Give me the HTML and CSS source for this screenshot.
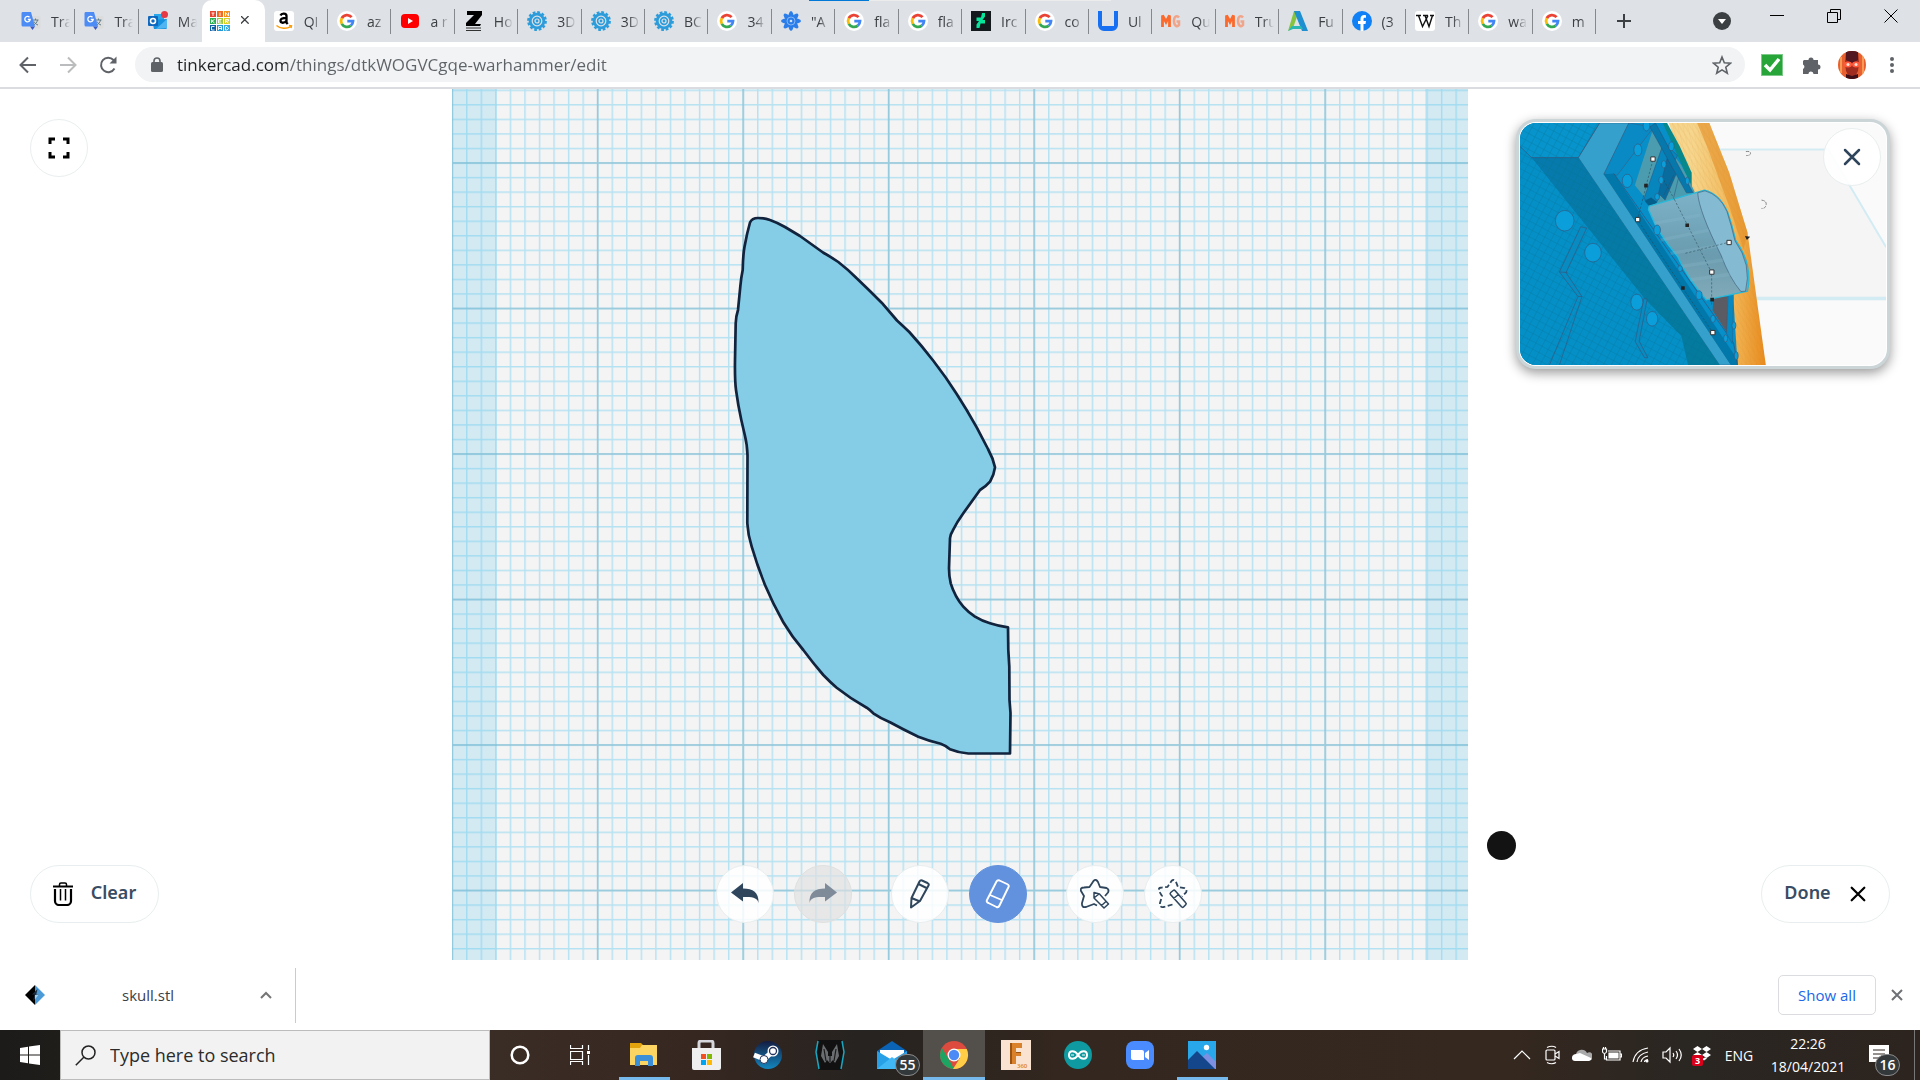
FILE: index.html
```html
<!DOCTYPE html>
<html lang="en">
<head>
<title>Tinkercad</title>
<meta charset="utf-8"/>
<link rel="stylesheet" href="styles.css">
</head>
<body>

<!-- shared icons -->
<svg class="defs" width="0" height="0">
  <symbol id="i-google" viewBox="0 0 20 20">
    <circle cx="10" cy="10" r="10" fill="#fff"/>
    <g fill="none" stroke-width="2.8">
      <path d="M14.6 6.2A6 6 0 0 0 4.8 7.2" stroke="#ea4335"/>
      <path d="M4.8 7.2A6 6 0 0 0 4.8 12.8" stroke="#fbbc05"/>
      <path d="M4.8 12.8A6 6 0 0 0 13.8 14.6" stroke="#34a853"/>
      <path d="M13.8 14.6A6 6 0 0 0 16 10.2H10.3" stroke="#4285f4"/>
    </g>
  </symbol>
  <symbol id="i-translate" viewBox="0 0 20 20">
    <path d="M9 5h9a1.500 1.500 0 0 1 1.500 1.500V16a1.500 1.500 0 0 1-1.500 1.500h-6z" fill="#dcdcdc"/>
    <path d="M11.500 9h6M14.500 7.500V9M16.500 9c-.5 2.500-2 4-4 5M13 10.500c1 2 2.500 3 4 3.500" stroke="#607d8b" fill="none"/>
    <path d="M1.500 1h8.500l4 14.500H2A1.500 1.500 0 0 1 .5 14V2.500A1.500 1.500 0 0 1 1.500 1z" fill="#4d8bf5"/>
    <path d="M9 15.500h5L11.500 19z" fill="#3a5bc7"/>
    <path d="M8.500 6.300A2.700 2.700 0 1 0 9.200 8.500H6.800" stroke="#fff" stroke-width="1.300" fill="none"/>
  </symbol>
  <symbol id="i-gear" viewBox="0 0 20 20">
    <circle cx="10" cy="10" r="8.300" fill="#2d9cdb"/>
    <circle cx="10" cy="10" r="8.600" fill="none" stroke="#2d9cdb" stroke-width="2.600" stroke-dasharray="2.700 1.800"/>
    <circle cx="10" cy="10" r="4.800" fill="none" stroke="#dee1e6" stroke-width="1.200"/>
    <circle cx="10" cy="10" r="2" fill="none" stroke="#dee1e6" stroke-width="1.200"/>
  </symbol>
  <symbol id="i-mg" viewBox="0 0 20 20">
    <path d="M1.500 16V4.500L5 11l3.500-6.500V16" fill="none" stroke="#fb6a2c" stroke-width="2.800"/>
    <path d="M18 6.500c-1.500-2-5-2-5 3.500s3.500 6 5 4v-3.500h-2.500" fill="none" stroke="#f0a58a" stroke-width="2.500"/>
  </symbol>
  <symbol id="i-x" viewBox="0 0 20 20">
    <path d="M3 3l14 14M17 3L3 17" fill="none" stroke="currentColor" stroke-width="2.500" stroke-linecap="round"/>
  </symbol>
</svg>

<div class="tabstrip">
  <div class="tabs">
    <button class="tab"><svg class="fav"><use href="#i-translate"/></svg><span>Tra</span></button>
    <button class="tab"><svg class="fav"><use href="#i-translate"/></svg><span>Tra</span></button>
    <button class="tab before">
      <svg class="fav" viewBox="0 0 20 20"><path d="M6 3h10v8H6z" fill="#28a8ea"/><path d="M4 9l15-1v8.500a1.500 1.500 0 0 1-1.500 1.500H6z" fill="#1490df"/><path d="M8 18l11-10v9z" fill="#50b5f0"/><rect y="5" width="10" height="10" rx="1" fill="#0f68be"/><circle cx="5" cy="10" r="2.500" fill="none" stroke="#fff" stroke-width="1.500"/><circle cx="16.500" cy="3.500" r="3.500" fill="#e53945"/></svg>
      <span>Ma</span></button>
    <button class="tab active" aria-label="Tinkercad">
      <svg class="fav" viewBox="0 0 20 20">
        <path d="M0 0h6v6H0z" fill="#e8432e"/><path d="M7 0h6v6H7z" fill="#f26a21"/><path d="M14 0h6v6h-6z" fill="#f5921e"/>
        <path d="M0 7h6v6H0z" fill="#2eae52"/><path d="M7 7h6v6H7z" fill="#9bca3c"/><path d="M14 7h6v6h-6z" fill="#d9d021"/>
        <path d="M0 14h6v6H0z" fill="#0f5fa6"/><path d="M7 14h6v6H7z" fill="#1f9ad6"/><path d="M14 14h6v6h-6z" fill="#36a9e1"/>
        <path d="M1.500 2h3M3 2v3M10 1.500v3.500M15.500 5V1.500l3 3.500V1.500M1.500 8.500V12M4.500 8.500L2 10l2.500 2M11.500 8.500h-3V12h3M8.500 10h2.500M15.500 12V8.500h3v1.500h-3l3 2M4.500 15.500h-3V19h3M8.500 19v-3.500h3V19M8.500 17.500h3M15.500 15.500v3.500h1.500l1.500-1.500-1.500-2z" fill="none" stroke="#fff" stroke-width=".9"/>
      </svg>
      <svg class="close" viewBox="2 2 16 16"><use href="#i-x"/></svg></button>
    <button class="tab">
      <svg class="fav" viewBox="0 0 20 20"><rect width="20" height="20" rx="3" fill="#fff"/><path d="M6.500 4.500c1-2.500 6-2.500 6 .5v6.500l1.200 1.500M12.500 6.800c-3.500 0-6 .7-6 3s4 3 6-.3" fill="none" stroke="#000" stroke-width="2.300"/><path d="M2.500 14.500c4 3.500 10 3.700 14.500.8M15 14.500l2.500.3-.5 2.200" fill="none" stroke="#f90" stroke-width="1.400"/></svg>
      <span>QI</span></button>
    <button class="tab"><svg class="fav"><use href="#i-google"/></svg><span>az</span></button>
    <button class="tab"><svg class="fav" viewBox="0 0 20 20"><rect x="1" y="3" width="18" height="14" rx="4" fill="#f00"/><path d="M8 7l5 3-5 3z" fill="#fff"/></svg><span>a r</span></button>
    <button class="tab"><svg class="fav" viewBox="0 0 20 20"><path d="M3 0h15v4l-7 9h6l-1 2H2v-3l8-8H3z"/><path d="M2 17h15M2 19.500h15" stroke="#333"/></svg><span>Ho</span></button>
    <button class="tab"><svg class="fav"><use href="#i-gear"/></svg><span>3D</span></button>
    <button class="tab"><svg class="fav"><use href="#i-gear"/></svg><span>3D</span></button>
    <button class="tab"><svg class="fav"><use href="#i-gear"/></svg><span>BC</span></button>
    <button class="tab"><svg class="fav"><use href="#i-google"/></svg><span>34</span></button>
    <button class="tab">
      <svg class="fav" viewBox="0 0 20 20"><g fill="#2b7de9"><ellipse cx="10" cy="10" rx="3.200" ry="10"/><ellipse cx="10" cy="10" rx="3.200" ry="10" transform="rotate(45 10 10)"/><ellipse cx="10" cy="10" rx="3.200" ry="10" transform="rotate(90 10 10)"/><ellipse cx="10" cy="10" rx="3.200" ry="10" transform="rotate(135 10 10)"/></g><circle cx="10" cy="10" r="4" fill="none" stroke="#9cc3f6" stroke-width=".8"/><circle cx="10" cy="10" r="1.300" fill="#cfe1fa"/></svg>
      <span>"A</span></button>
    <button class="tab"><svg class="fav"><use href="#i-google"/></svg><span>fla</span></button>
    <button class="tab"><svg class="fav"><use href="#i-google"/></svg><span>fla</span></button>
    <button class="tab"><svg class="fav" viewBox="0 0 20 20"><path d="M0 0h20v20H0z" fill="#14191d"/><path d="M14 2v3.500L11.500 9H14v3.500H9.500L8.500 17H5.500v-3.500L8 10H5.500V6.500H10L11 2z" fill="#06e59a"/></svg><span>Irc</span></button>
    <button class="tab"><svg class="fav"><use href="#i-google"/></svg><span>co</span></button>
    <button class="tab"><svg class="fav" viewBox="0 0 20 20"><path d="M0 0h4v15h12V0h4v14a6 6 0 0 1-6 6H6a6 6 0 0 1-6-6z" fill="#176ff2"/></svg><span>Ul</span></button>
    <button class="tab"><svg class="fav"><use href="#i-mg"/></svg><span>Qu</span></button>
    <button class="tab"><svg class="fav"><use href="#i-mg"/></svg><span>Tru</span></button>
    <button class="tab"><svg class="fav" viewBox="0 0 20 20"><path d="M0 20L6 0h5L5 17z" fill="#86c440"/><path d="M6 0h6l8 20h-6z" fill="#1e8fd0"/><path d="M0 20l4-5h9l2 3H5z" fill="#2bb7b3"/></svg><span>Fu</span></button>
    <button class="tab"><svg class="fav" viewBox="0 0 20 20"><circle cx="10" cy="10" r="10" fill="#0f80f5"/><path d="M8.500 20v-7H6v-3h2.500V8c0-2.500 1.500-4 3.800-4l1.700.2v2.500h-1.200c-1 0-1.300.6-1.300 1.300v2H14l-.5 3h-2v7z" fill="#fff"/></svg><span>(3</span></button>
    <button class="tab"><svg class="fav" viewBox="0 0 20 20"><rect width="20" height="20" rx="3" fill="#fff"/><path d="M1 4.500h5M8 4.500h5M15 4.500h4M3.500 4.500l4 11 5.500-11M10 4.500l4 11 3.500-11" fill="none" stroke="#111" stroke-width="1.400"/></svg><span>Th</span></button>
    <button class="tab"><svg class="fav"><use href="#i-google"/></svg><span>wa</span></button>
    <button class="tab"><svg class="fav"><use href="#i-google"/></svg><span>m</span></button>
  </div>
  <div class="win-btns">
    <button class="newtab" aria-label="New tab"><svg width="16" height="16"><path d="M8 1v14M1 8h14" stroke="#3c4043" stroke-width="2"/></svg></button>
    <button class="tabsearch" aria-label="Search tabs"><svg width="18" height="18"><circle cx="9" cy="9" r="9" fill="#3c4043"/><path d="M5 7h8l-4 5z" fill="#fff"/></svg></button>
    <button aria-label="Minimise"><svg width="14" height="14"><path d="M0 6.500h14" stroke="#000"/></svg></button>
    <button aria-label="Restore"><svg width="14" height="14"><path d="M.5 3.500h10v10H.5zM3.500 3V.5h10v10H11" fill="none" stroke="#000"/></svg></button>
    <button aria-label="Close"><svg width="14" height="14"><path d="M.5.5l13 13M13.500.5l-13 13" stroke="#000"/></svg></button>
  </div>
  <div class="loadbar"></div>
</div>

<div class="toolbar">
  <button aria-label="Back"><svg width="20" height="20"><path d="M18 10H3M10 2.500L2.500 10l7.500 7.500" fill="none" stroke="#5f6368" stroke-width="2"/></svg></button>
  <button aria-label="Forward"><svg width="20" height="20"><path d="M2 10h15M10 2.500l7.500 7.500-7.500 7.500" fill="none" stroke="#babcbe" stroke-width="2"/></svg></button>
  <button aria-label="Reload"><svg width="20" height="20"><path d="M16.500 13.500A7.200 7.200 0 1 1 15.500 5L17 6.500" fill="none" stroke="#5f6368" stroke-width="2"/><path d="M18.500 1.500v7h-7z" fill="#5f6368"/></svg></button>
  <div class="omnibox">
    <svg width="12" height="15"><rect y="5" width="12" height="10" rx="1.500" fill="#5f6368"/><path d="M3 6V4a3 3 0 0 1 6 0v2" fill="none" stroke="#5f6368" stroke-width="1.600"/></svg>
    <input type="text" aria-label="Address" value="tinkercad.com/things/dtkWOGVCgqe-warhammer/edit">
    <svg width="20" height="20" viewBox="0 0 20 20"><path d="M10 2l2.300 5.700 6.200.5-4.700 4 1.500 6-5.300-3.300-5.300 3.300 1.500-6-4.700-4 6.200-.5z" fill="none" stroke="#5f6368" stroke-width="1.600"/></svg>
  </div>
  <button aria-label="Extension"><svg width="22" height="22"><path d="M0 0h22v22H0z" fill="#7cc98a"/><path d="M1 1h20v20H1z" fill="#27a538"/><path d="M4 11l5 5 9-11" fill="none" stroke="#fff" stroke-width="3.500"/></svg></button>
  <button aria-label="Extensions"><svg width="20" height="20"><path d="M2 5h4.500a2.500 2.500 0 1 1 5 0H16v4.500a2.500 2.500 0 1 1 0 5V19h-4.500a2.500 2.500 0 0 0-5 0H1v-5a2.500 2.500 0 0 0 0-4.500V6z" fill="#5f6368"/></svg></button>
  <button aria-label="Profile">
    <svg width="28" height="28"><defs><clipPath id="av"><circle cx="14" cy="14" r="14"/></clipPath></defs><g clip-path="url(#av)"><path d="M0 0h28v28H0z" fill="#e8602f"/><path d="M3 6v16M25 5v18" stroke="#f79a55" stroke-width="2"/><path d="M8 0h12l1 12-1 8-4 8h-4l-4-8-1-8z" fill="#a02c20"/><path d="M8 0h12v9l-6 3-6-3z" fill="#521720"/><ellipse cx="10" cy="13.500" rx="4" ry="3" fill="#ff5a3c"/><ellipse cx="18" cy="13.500" rx="4" ry="3" fill="#ff5a3c"/><circle cx="10" cy="13.500" r="1.500" fill="#ffe3d6"/><circle cx="18" cy="13.500" r="1.500" fill="#ffe3d6"/><path d="M8 23l6 2 6-2v5H8z" fill="#3f0f17"/></g></svg></button>
  <button aria-label="Menu"><svg width="6" height="18"><circle cx="3" cy="3" r="2" fill="#5f6368"/><circle cx="3" cy="9" r="2" fill="#5f6368"/><circle cx="3" cy="15" r="2" fill="#5f6368"/></svg></button>
</div>

<div class="workspace">
  <div class="side side-left">
    <button class="round" aria-label="Fullscreen"><svg width="22" height="22"><path d="M2 7V2h5M15 2h5v5M20 15v5h-5M7 20H2v-5" fill="none" stroke="#000" stroke-width="3"/></svg></button>
    <button class="pill">
      <svg width="20" height="24"><path d="M0 4.500h20" stroke="#000" stroke-width="2"/><path d="M6.500 4V2.500A1.500 1.500 0 0 1 8 1h4a1.500 1.500 0 0 1 1.500 1.500V4" fill="none" stroke="#000" stroke-width="1.500"/><path d="M2 7v12a4 4 0 0 0 4 4h8a4 4 0 0 0 4-4V7" fill="none" stroke="#000" stroke-width="2.200"/><path d="M7.500 7v11.500M12.500 7v11.500" stroke="#000" stroke-width="1.500"/></svg>
      <span>Clear</span></button>
  </div>

  <div class="board">
    <svg class="sketch" viewBox="452 89 1016 871" preserveAspectRatio="xMidYMin slice">
      <defs>
        <pattern id="minor" x="451.5" y="162.300" width="14.550" height="14.550" patternUnits="userSpaceOnUse">
          <path d="M.7 0v14.550M0 .7h14.550" stroke="#5cc8ee" stroke-opacity=".42" stroke-width="1.500"/>
        </pattern>
        <pattern id="major" x="451.2" y="162" width="145.500" height="145.500" patternUnits="userSpaceOnUse">
          <path d="M1 0v145.500M0 1h145.500" stroke="#5c9fb8" stroke-opacity=".34" stroke-width="2"/>
        </pattern>
      </defs>
      <path d="M452 89h1016v871H452z" fill="#f4f4f4"/>
      <path d="M452 89h45v871h-45zM1425 89h43v871h-43z" fill="#d4eaf2"/>
      <path d="M452 89h1016v871H452z" fill="url(#minor)"/>
      <path d="M452 89h1016v871H452z" fill="url(#major)"/>
      <path d="M750 222.500Q752 218 758 218Q765 218 770 220Q777 222.500 785 227L800 236L823 252.500Q831 257 838.300 262Q848 269.500 856.700 278.300Q870 291 881.700 302.700L897 320.500Q903 326 909.300 332Q922 346 933.300 360.700Q946 377 956.700 394Q967 410 976.700 427.300L988 449Q993 458 995 467.300Q994 475 990 481.700Q986 486.500 980 490L963.300 513.300Q957 522 952.700 530.700Q950 535 950 538.300L949 568.300Q949 576 950.700 583.300Q955 597 963.300 606.700Q968 612 975 616.700Q982 621 990 623.300Q998 626 1008 627.300L1008.300 650L1009.300 666.700L1009.500 700L1010.500 713L1010 753.500H968.300Q959 753 950 749.300Q945 745 940.700 743.700Q929 741 918.300 736.700Q904 730 890 722.300Q881 718.500 873.300 713.300Q870 710 866.700 707.700Q851 699 836.700 687.700Q830 682 823.300 675Q813 663 803.300 650Q792 637 783.300 622.300Q773 604 765 585Q757 565 751.700 546.700Q748 535 747.300 523.300L747.500 455Q747 444 745 436L741.300 420Q738 405 736 390Q734.700 380 735 360L735.700 323.300Q736 316 738 310L740.300 286.700Q741 278 742.700 270Q743 255 744.500 246.700Q747 233 750 222.500z" fill="#85cce6" stroke="#11233d" stroke-width="2.700" stroke-linejoin="round"/>
    </svg>
    <div class="tools">
      <button class="round" aria-label="Undo"><svg width="28" height="22"><path d="M0 9.500L12 0v5.500c10 0 16 4 15.500 14.500-1-5-5-6.500-15.500-6v4.500z" fill="#2f455c"/></svg></button>
      <button class="round off" aria-label="Redo" disabled><svg width="28" height="22"><path d="M28 9.500L16 0v5.500C6 5.500 0 9.500.5 20c1-5 5-6.500 15.500-6v4.500z" fill="#7f8b98"/></svg></button>
      <button class="round gap" aria-label="Pencil"><svg width="22" height="30"><path d="M2 28.500l.5-9.500L10.500 2.500Q11.500.8 13 1.500l5.500 2.500q1.800 1 1 2.500L11 22zM2.500 19l8.500 3.500M9.500 5l9 4.500" fill="none" stroke="#2f455c" stroke-width="2" stroke-linejoin="round"/></svg></button>
      <button class="round on" aria-label="Eraser"><svg width="26" height="30"><path d="M2 21L11.500 2.500Q12.500.7 14.500 1.500l7.500 3.500q2.500 1.200 1.500 3L14.500 26.500Q13.500 28.800 11.500 28l-8-4Q1 23 2 21zM5 16l13 5.500" fill="none" stroke="#fff" stroke-width="1.900"/></svg></button>
      <button class="round gap" aria-label="Draw shape"><svg width="30" height="30"><path d="M17 26.500l-3-1.500-8 3Q1.500 29 2 24l2-7-3-5Q0 8.500 4 8.500l5.500-.5 4-6q2.500-2.500 4.500 1l2 5 6.500 1q3 1.500 1.500 4.500l-3 3.500" fill="none" stroke="#2f455c" stroke-width="1.800" stroke-linejoin="round"/><path d="M14 19v-5.500l5.500 1.500L28.500 25l-4.500 4zM14.500 18.500l4.500-3.500M21.500 26.500l4.500-4" fill="none" stroke="#2f455c" stroke-width="1.500" stroke-linejoin="round"/></svg></button>
      <button class="round" aria-label="Erase shape"><svg width="30" height="30"><path d="M14.500 25.500L6 28Q1.500 29 2 24l2-7-3-5Q0 8.500 4 8.500l5.500-.5 4-6q2.500-2.500 4.500 1l2 5 6.500 1q3 1.500 1.500 4.500l-4 4" fill="none" stroke="#2f455c" stroke-width="1.800" stroke-dasharray="5 2.500"/><path d="M12.500 15.500q-.8-1 .2-2l2.500-2q1-.8 2 .2l10.500 12q1 1 0 2L25.500 28q-1 .8-2-.2zM15.500 19.500l5-4" fill="none" stroke="#2f455c" stroke-width="1.600"/></svg></button>
    </div>
  </div>

  <div class="side side-right">
    <div class="preview">
      <svg class="scene" viewBox="57 38 1102 728" preserveAspectRatio="xMidYMid slice">
        <defs>
          <pattern id="mesh" width="21" height="21" patternUnits="userSpaceOnUse" patternTransform="rotate(28)"><path d="M0 0h21M0 0v21" stroke="#036f8e" stroke-width="2" stroke-opacity=".75" fill="none"/></pattern>
          <pattern id="grain" width="14" height="40" patternUnits="userSpaceOnUse" patternTransform="rotate(-14)"><path d="M0 0v40M0 0l14 40" stroke="#c98322" stroke-opacity=".4" fill="none"/></pattern>
          <linearGradient id="gold" x1="0" x2="1"><stop offset=".25" stop-color="#f6d58c"/><stop offset=".65" stop-color="#f2b95a"/><stop offset="1" stop-color="#e88a1c"/></linearGradient>
          <linearGradient id="face" x1="0" y1="0" x2="0" y2="1"><stop offset="0" stop-color="#7db3c9"/><stop offset=".6" stop-color="#6a9bae"/><stop offset="1" stop-color="#82abb9"/></linearGradient>
          <linearGradient id="shade" x1="0" y1="0" x2="1" y2="1"><stop offset="0" stop-color="#067aad"/><stop offset="1" stop-color="#047a9c"/></linearGradient>
        </defs>
        <path d="M57 38h1102v728H57z" fill="#fafafa"/>
        <path d="M540 118h440l179 290v158H700z" fill="#f5f5f5"/>
        <path d="M540 118h445L1159 412" fill="none" stroke="#d3ecf4" stroke-width="6"/>
        <path d="M690 566h469" stroke="#d3ecf4" stroke-width="10"/>
        <path d="M505 38h122l60 150 55 180 55 398H700V560L578 240z" fill="url(#gold)"/>
        <path d="M627 38l60 150 55 180-12 50-40-120-70-190-30-70z" fill="#e58f28" opacity=".6"/>
        <path d="M505 38h122l60 150 55 180 55 398H700V560L578 240z" fill="url(#grain)"/>
        <path d="M500 38l38 70 36 80v50l-60-90-50-110z" fill="#07888a"/>
        <path d="M57 38h430l92 202 120 320 13 206H57z" fill="#078fc9"/>
        <path d="M57 38h240l-64 104H92L57 108z" fill="#0793cb"/>
        <path d="M297 38h88L310 192l383 574h-35L233 142z" fill="#35a0cc" stroke="#35637f" stroke-width="1.500"/>
        <path d="M92 142h141l425 624H550L400 540z" fill="url(#shade)"/>
        <path d="M57 108l35 34 343 427 108 110 20 87H57z" fill="#058fc7"/>
        <path d="M57 38h240l-64 104 425 624H57z" fill="url(#mesh)"/>
        <path d="M57 108l35 34h141l64-104" fill="none" stroke="#35577f" stroke-width="2"/>
        <path d="M385 38L310 192l40 3L460 50z" fill="#0a8ac4" stroke="#43577a" stroke-width="1.500"/>
        <path d="M310 192l30-2 372 560v16h-20z" fill="#0277a9"/>
        <path d="M340 190L700 700l12 66" fill="none" stroke="#364e74" stroke-width="2"/>
        <path d="M458 55l-55 170 60 75 120-55-40-80z" fill="#4b9cae"/>
        <path d="M490 96l-60 170 35 20 36-90 30-60z" fill="#0785bd" stroke="#2b4e79" stroke-width="1.500"/>
        <path d="M500 145l28 45-34 80-20-20zM520 195l-30 60M535 200l-15 62" fill="#086c9e" stroke="#2b4e79" stroke-width="1.500"/>
        <path d="M465 38l113 210h-20L448 50z" fill="#0678ab" stroke="#2b4e79" stroke-width="1.500"/>
        <path d="M640 560h42v112l-45-70z" fill="#5b5b63"/>
        <path d="M684 550h16l-4 152-17-30z" fill="#0789c0" stroke="#2b4e79"/>
        <path d="M432 272l20-10 18 14-20 18z" fill="#045f8c"/>
        <path d="M446 288l146-42 20-6q45 10 70 66 14 40 24 84 28 40 36 78 8 40 0 76L618 570q-60-70-86-130-60-70-88-142z" fill="url(#face)" stroke="#28b9da" stroke-width="4"/>
        <path d="M592 248l22-6q44 12 66 62 14 44 24 88 26 36 34 74 8 40-2 78l-14 1q-34-40-60-110-66-130-70-187z" fill="#84bbd2" stroke="#41607e" stroke-width="2"/>
        <path d="M460 340l140-25M480 390l145-30M510 430l140-22M540 470l130-20M570 510l120-17" stroke="#8bbccd" stroke-width="10" opacity=".25"/>
        <path d="M522 268l112 220v100M555 430l130-33M457 150l-20 77-26 102 136 205 90 134M490 210l32 58" fill="none" stroke="#26434f" stroke-width="1.500" stroke-dasharray="7 5"/>
        <g fill="#0a9fda" stroke="#35577f" stroke-width="2">
          <path d="M240 350l-64 136 56 74h12l-48-72 62-134zM232 560L146 766M244 560L176 766M176 486l24 2M430 566l-26 130 28 48h10l-26-50 24-126z" fill="#078bc0"/>
          <ellipse cx="192" cy="332" rx="28" ry="31"/><ellipse cx="277" cy="428" rx="25" ry="28"/><ellipse cx="409" cy="577" rx="18" ry="24"/><ellipse cx="455" cy="627" rx="17" ry="22"/>
          <ellipse cx="412" cy="119" rx="12" ry="18"/><ellipse cx="380" cy="212" rx="15" ry="20"/><ellipse cx="438" cy="46" rx="10" ry="16"/><ellipse cx="470" cy="360" rx="10" ry="15"/><ellipse cx="596" cy="556" rx="9" ry="13"/><ellipse cx="638" cy="627" rx="7" ry="11"/><ellipse cx="676" cy="686" rx="6" ry="11"/><ellipse cx="701" cy="647" rx="6" ry="11"/><ellipse cx="708" cy="738" rx="6" ry="12"/><ellipse cx="539" cy="476" rx="7" ry="9"/><ellipse cx="513" cy="108" rx="8" ry="13"/><ellipse cx="482" cy="210" rx="7" ry="11"/><ellipse cx="470" cy="260" rx="7" ry="10"/><ellipse cx="490" cy="162" rx="7" ry="11"/><ellipse cx="561" cy="212" rx="6" ry="11"/>
        </g>
        <g fill="#fff" stroke="#333" stroke-width="3"><path d="M451 140h13v13h-13zM405 322h13v13h-13zM680 391h13v13h-13zM628 480h13v13h-13zM631 662h13v13h-13z"/></g>
        <path d="M431 221h11v11h-11zM555 340h11v11h-11zM542 529h11v11h-11zM630 564h11v11h-11zM734 378l16 2-10 10z" fill="#222"/>
        <path d="M737 124q14-2 14 5t-13 7M784 270q16 2 14 14t-14 11" fill="none" stroke="#888" stroke-width="3" stroke-dasharray="10 3"/>
      </svg>
      <button class="round preview-close" aria-label="Close preview"><svg width="20" height="20"><use href="#i-x"/></svg></button>
    </div>
    <button class="pill"><span>Done</span> <svg width="18" height="18" viewBox="0 0 20 20" color="#000"><use href="#i-x"/></svg></button>
  </div>
  <div class="brush"></div>
</div>

<div class="downloads">
  <button class="dl-item">
    <svg width="20" height="20"><path d="M10 0L0 10l10 10z"/><path d="M10 0l10 10-10 10z" fill="#4a9bd8"/><path d="M12.500 4L7 9.500h2.500L8 16l6-6.500h-2.700z" fill="#1d2c3c"/><path d="M10 10l4-.5-4 5z" fill="#9bd0f0"/></svg>
    <span>skull.stl</span>
    <svg width="12" height="8"><path d="M1 7l5-5 5 5" fill="none" stroke="#757575" stroke-width="2"/></svg>
  </button>
  <button class="showall">Show all</button>
  <button class="dl-close" aria-label="Close downloads"><svg width="12" height="12"><path d="M1 1l10 10M11 1L1 11" stroke="#6e7175" stroke-width="2"/></svg></button>
</div>

<div class="taskbar">
  <button class="start" aria-label="Start"><svg width="20" height="20"><path d="M0 3l8-1.200v7.700H0zM9 1.600L20 0v9.500H9zM0 10.500h8v7.700L0 17zM9 10.500h11V20L9 18.400z" fill="#fff"/></svg></button>
  <div class="search">
    <svg width="21" height="21"><circle cx="13.500" cy="7.500" r="6.500" fill="none" stroke="#222" stroke-width="1.500"/><path d="M9 12L.8 20.200" stroke="#222" stroke-width="1.500"/></svg>
    <input type="text" aria-label="Search" placeholder="Type here to search">
  </div>
  <div class="shell">
    <button aria-label="Cortana"><svg width="20" height="20"><circle cx="10" cy="10" r="8.300" fill="none" stroke="#fff" stroke-width="2.500"/></svg></button>
    <button aria-label="Task view"><svg width="20" height="20"><path d="M.5 0v3.500h12V0M.5 20v-3.500h12V20M.5 6.500h12v8H.5zM18.500 0v5M18.500 10v10" fill="none" stroke="#fff" stroke-width="1.200"/><path d="M17 6h3v3h-3z" fill="#fff"/></svg></button>
  </div>
  <div class="apps">
    <button class="open" aria-label="File Explorer"><svg width="30" height="30"><path d="M1 3h11l2 2v5H1z" fill="#e3a30c"/><path d="M1 8h10l2-3h15v20H1z" fill="#fcd462"/><path d="M6 26v-8a3 3 0 0 1 3-3h12a3 3 0 0 1 3 3v8h-5v-5h-8v5z" fill="#3b8fd8"/></svg></button>
    <button aria-label="Store"><svg width="30" height="30"><path d="M8 10V3a2 2 0 0 1 2-2h10a2 2 0 0 1 2 2v7" fill="none" stroke="#d5d7dc" stroke-width="3"/><path d="M1 8h29v20a2 2 0 0 1-2 2H3a2 2 0 0 1-2-2z" fill="#efefef"/><path d="M10 14h5v5h-5z" fill="#f25022"/><path d="M16 14h5v5h-5z" fill="#7fba00"/><path d="M10 20h5v5h-5z" fill="#00a4ef"/><path d="M16 20h5v5h-5z" fill="#ffb900"/></svg></button>
    <button aria-label="Steam"><svg width="30" height="30"><defs><linearGradient id="st" x2="0" y2="1"><stop offset="0" stop-color="#141c40"/><stop offset="1" stop-color="#1387c0"/></linearGradient></defs><circle cx="15" cy="15" r="14" fill="url(#st)"/><path d="M1 15l10 4 7-6" fill="none" stroke="#fff" stroke-width="5"/><circle cx="20" cy="11" r="5.500" fill="#fff"/><circle cx="20" cy="11" r="3.500" fill="#fff" stroke="#25345c" stroke-width="1.300"/><circle cx="11" cy="19.500" r="4" fill="#fff" stroke="#25345c"/></svg></button>
    <button aria-label="PredatorSense"><svg width="30" height="30"><path d="M3 0h24l2 12-3 18H4L1 12z" fill="#111"/><path d="M3 1L1 12l3 17M27 1l2 11-3 17" fill="none" stroke="#19a6c0" stroke-width="1.500"/><path d="M8 4l5 8v4h4v-4l5-8 2 12-4 7-2-3-3 3-3-3-2 3-4-7z" fill="#6b6e71"/><path d="M9 9l2 12M21 9l-2 12M15 16v6" stroke="#1b1b1b" stroke-width="1.200"/></svg></button>
    <button aria-label="Mail"><svg width="30" height="30"><path d="M0 11l15-10 15 10v8H0z" fill="#0a63b5"/><path d="M3 10h24v12H3z" fill="#fff"/><path d="M0 11l15 9 15-9v18H0z" fill="#27a0e8"/><path d="M0 29l15-12 15 12z" fill="#41b8f5"/></svg><span class="badge">55</span></button>
    <button class="open active" aria-label="Chrome"><svg width="30" height="30"><circle cx="15" cy="15" r="14" fill="#dd4b3e"/><path d="M2.900 8L10 19.500l5 9.500A14 14 0 0 1 2.900 8z" fill="#1da462"/><path d="M15 9h12.700A14 14 0 0 1 14 29l7-11z" fill="#ffcd46"/><circle cx="15" cy="15" r="6.500" fill="#fff"/><circle cx="15" cy="15" r="5.200" fill="#4c8bf5"/></svg></button>
    <button aria-label="Fusion 360"><svg width="30" height="30"><path d="M0 0h30v30H0z" fill="#fbe3d2"/><path d="M9 3h12v5h-6v4h5v4h-5v8H9z" fill="#d9822b"/><path d="M9 3h2v21H9zM15 12h5v1h-5z" fill="#9c5412"/><text x="16" y="28" class="tiny">360</text></svg></button>
    <button aria-label="Arduino"><svg width="30" height="30"><circle cx="15" cy="15" r="14" fill="#0e9aa0"/><path d="M15 15c-3-5-9-5-9 0s6 5 9 0 9-5 9 0-6 5-9 0z" fill="none" stroke="#fff" stroke-width="2"/><path d="M8 15h3M19 15h3" stroke="#fff"/></svg></button>
    <button aria-label="Zoom"><svg width="30" height="30"><rect x="1" y="1" width="28" height="28" rx="8" fill="#4a8cff"/><path d="M6 10h11a2 2 0 0 1 2 2v8H8a2 2 0 0 1-2-2zM20 13l4-3v10l-4-3z" fill="#fff"/></svg></button>
    <button class="open multi" aria-label="Photos"><svg width="30" height="30"><path d="M1 1h28v28H1z" fill="#28a8ea"/><path d="M14 18l6-5 9 9v7H14z" fill="#7d8fe0"/><path d="M1 20L10 11l18 18H1z" fill="#14468c"/><circle cx="19.500" cy="7.500" r="2.700" fill="#fff"/></svg></button>
  </div>
  <div class="tray">
    <svg viewBox="0 0 20 20"><path d="M2 14l8-8 8 8" /></svg>
    <svg viewBox="0 0 20 20"><rect x="4" y="5" width="9" height="10" rx="1"/><path d="M13 9l4-2.500v7L13 11M5 2.500q5-2.500 9 0M5 17.500q5 2.500 9 0"/></svg>
    <svg viewBox="0 0 20 20"><path d="M0 13a4 4 0 0 1 4-4 6 6 0 0 1 11-1 4 4 0 0 1 4 7H3a3 3 0 0 1-3-2z" fill="#a9a9a9" stroke="none"/><path d="M0 13q0-3 4-4l4-1 11 5q1 2-2 3H3q-3 0-3-3z" fill="#fff" stroke="none"/></svg>
    <svg viewBox="0 0 20 20"><path d="M6 6h12v9H4.500V11M18.500 9h1v3h-1M.5 4h4v3q-2 3-4 0zM1.500 2v2M3.500 2v2M2.500 9v5h2"/><path d="M7 8h9v5H7z" fill="#fff"/></svg>
    <svg viewBox="0 0 20 20"><path d="M1 17Q3 5 16 3M5 17Q6 9 16 7M9 17q1-5 7-6M12.500 17q0-2 3.500-2.500"/><circle cx="15" cy="16" r="1.500" fill="#fff" stroke="none"/></svg>
    <svg viewBox="0 0 20 20"><path d="M1 7h3l4-4v14l-4-4H1zM11 8q1.500 2 0 4M14 6q3 4 0 8M17 4q4.500 6 0 12"/></svg>
    <span class="dropbox"><svg viewBox="0 0 20 20"><path d="M5.500 1l4.500 3-4.500 3L1 4zM14.500 1L19 4l-4.500 3L10 4zM14.500 7l4.500 3-4.500 3L10 10zM5.500 7l4.500 3-4.500 3L1 10zM10 14l3-1.500 2 1-3 2z" fill="#fff" stroke="none"/></svg><b>3</b></span>
  </div>
  <div class="lang">ENG</div>
  <div class="clock"><span>22:26</span><span>18/04/2021</span></div>
  <button class="notes" aria-label="Notifications"><svg width="20" height="20"><path d="M0 0h20v17h-5v3l-3-3H0z" fill="#fff"/><path d="M4 5h12M4 9h12M4 13h8" stroke="#2b2420" stroke-width="1.200"/></svg><span class="badge">16</span></button>
  <div class="peek"></div>
</div>

</body>
</html>
```

FILE: styles.css
```css
* { box-sizing:border-box; }
body {
  margin:0;
  height:100vh;
  display:flex;
  flex-direction:column;
  overflow:hidden;
  background:#fff;
  font-family:"Open Sans", "Noto Sans", sans-serif;
  font-size:14px;
  color:#3c4043;
}
button { border:0; padding:0; background:none; font:inherit; color:inherit; cursor:pointer; display:flex; align-items:center; justify-content:center; }
input { border:0; padding:0; background:none; font:inherit; outline:0; min-width:0; }
svg { display:block; flex:none; }
.defs { position:absolute; }

/* tabs */
.tabstrip { height:42px; display:flex; background:#dee1e6; padding-left:12px; position:relative; }
.tabs { flex:1; display:flex; min-width:0; }
.tab {
  flex:1 1 0;
  min-width:0;
  padding:0 2px 0 9px;
  justify-content:flex-start;
  gap:10px;
  background:linear-gradient(#85888c,#85888c) right 9px / 1px 25px no-repeat;
}
.tab span {
  flex:1;
  text-align:left;
  white-space:nowrap;
  -webkit-mask-image:linear-gradient(to right,#000 8px,transparent 19px);
  mask-image:linear-gradient(to right,#000 8px,transparent 19px);
}
.fav { width:20px; height:20px; }
.tab.before { background:none; }
.tab.active { background:#fff; border-radius:10px 10px 0 0; gap:11px; padding-left:8px; }
.tab .close { width:10px; height:10px; }
.win-btns { width:324px; display:flex; padding-right:1px; }
.win-btns button { width:57px; height:32px; align-self:start; }
.win-btns .newtab { width:56px; height:42px; }
.win-btns .tabsearch { width:36px; height:42px; margin-left:52px; margin-right:8px; }
.loadbar { position:absolute; left:809px; top:0; width:302px; height:1px; background:linear-gradient(to right,#0078d7 60px,#ececec 60px); }

/* address row */
.toolbar { height:47px; display:flex; align-items:center; padding:0 8px; border-bottom:2px solid #dadce0; }
.toolbar button { width:40px; height:36px; }
.omnibox { flex:1; height:35px; margin:0 7px; padding:0 13px 0 16px; display:flex; align-items:center; gap:14px; background:#f1f3f4; border-radius:18px; }
.omnibox input {
  flex:1;
  font-size:17px;
  height:30px;
  color:transparent;
  background:linear-gradient(to right,#202124 110px,#5f6368 110px);
  -webkit-background-clip:text;
  background-clip:text;
}

/* editor */
.workspace { flex:1; min-height:0; display:flex; position:relative; }
.side { flex:1; display:flex; flex-direction:column; justify-content:space-between; padding:30px 30px 37px; }
.side-left { align-items:flex-start; }
.side-right { align-items:flex-end; }
.board { height:100%; aspect-ratio:1016 / 871; position:relative; }
.sketch { width:100%; height:100%; }
.round { width:58px; height:58px; border-radius:50%; border:1px solid #e9eeef; background:rgba(255,255,255,.85); color:#2f455c; }
.round.off { background:rgba(225,225,225,.65); border-color:#dfe0e0; }
.round.on { background:#6292dd; border-color:#6292dd; }
.pill {
  width:129px;
  height:58px;
  gap:18px;
  border:1px solid #e8eeef;
  border-radius:29px;
  font-family:"Noto Sans", "Open Sans", sans-serif;
  font-size:18px;
  font-weight:600;
  color:#384c63;
}
.pill span { padding-bottom:4px; }
.tools { position:absolute; left:0; right:2px; bottom:37px; display:flex; justify-content:center; gap:20px; }
.tools .gap { margin-left:19px; }
.preview { position:relative; width:374px; height:250px; border:3px solid #cbd5d7; border-radius:20px; background:#fff; padding:1px; box-shadow:0 4px 12px rgba(0,0,0,.4); }
.scene { width:100%; height:100%; border-radius:16px; }
.preview-close { position:absolute; top:6px; right:6px; background:rgba(255,255,255,.9); }
.brush { position:absolute; left:1487px; bottom:100px; width:29px; height:29px; border-radius:50%; background:#131313; }

/* downloads */
.downloads { height:70px; display:flex; align-items:center; padding-right:9px; font-size:15px; }
.dl-item { width:296px; height:55px; padding:0 23px 0 25px; justify-content:space-between; border-right:1px solid #c9cbce; }
.dl-item span { flex:1; text-align:left; padding-left:77px; }
.showall { margin-left:auto; width:98px; height:40px; border:1px solid #dadce0; border-radius:5px; color:#1a67e8; }
.dl-close { width:28px; height:28px; margin-left:7px; }

/* taskbar */
.taskbar { height:50px; display:flex; background:linear-gradient(to right,#1c1b19,#3a2d25 26%,#372721 36%,#262320 45%,#33271f 55%,#35281f 78%,#2a2622 88%,#2d241f); color:#fff; }
.start { width:60px; }
.search { width:430px; display:flex; align-items:center; gap:14px; padding-left:14px; background:#f2f2f2; border:1px solid #bcbcbc; }
.search input { flex:1; font-size:18px; }
.search input::placeholder { color:#2b2b2b; opacity:1; }
.shell, .apps { display:flex; }
.shell button { width:60px; }
.apps { flex:1; padding-left:3px; }
.apps button { width:62px; position:relative; }
.apps .open { background:linear-gradient(#76b9ed,#76b9ed) center bottom / 51px 3px no-repeat; }
.apps .active { background-color:#53504b; background-size:100% 3px; }
.badge { position:absolute; right:3px; bottom:4px; width:25px; height:22px; border-radius:11px; border:1px solid #8b8b8b; background:#33383b; color:#fff; font-size:14px; line-height:20px; font-weight:600; text-align:center; }
.tiny { font-size:6px; fill:#d9822b; font-weight:600; }
.tray { display:flex; align-items:center; gap:10px; }
.tray svg { width:20px; height:20px; fill:none; stroke:#fff; stroke-width:1.200; }
.dropbox { position:relative; }
.dropbox b { position:absolute; left:0; bottom:-1px; width:11px; height:11px; border-radius:2px; background:#d9001b; font-size:9px; line-height:11px; text-align:center; }
.lang { align-self:center; width:54px; text-align:center; }
.clock { width:84px; display:flex; flex-direction:column; justify-content:center; align-items:center; line-height:23px; }
.notes { width:64px; position:relative; padding-right:6px; }
.notes .badge { right:14px; }
.peek { width:6px; border-left:1px solid #777; }
```
